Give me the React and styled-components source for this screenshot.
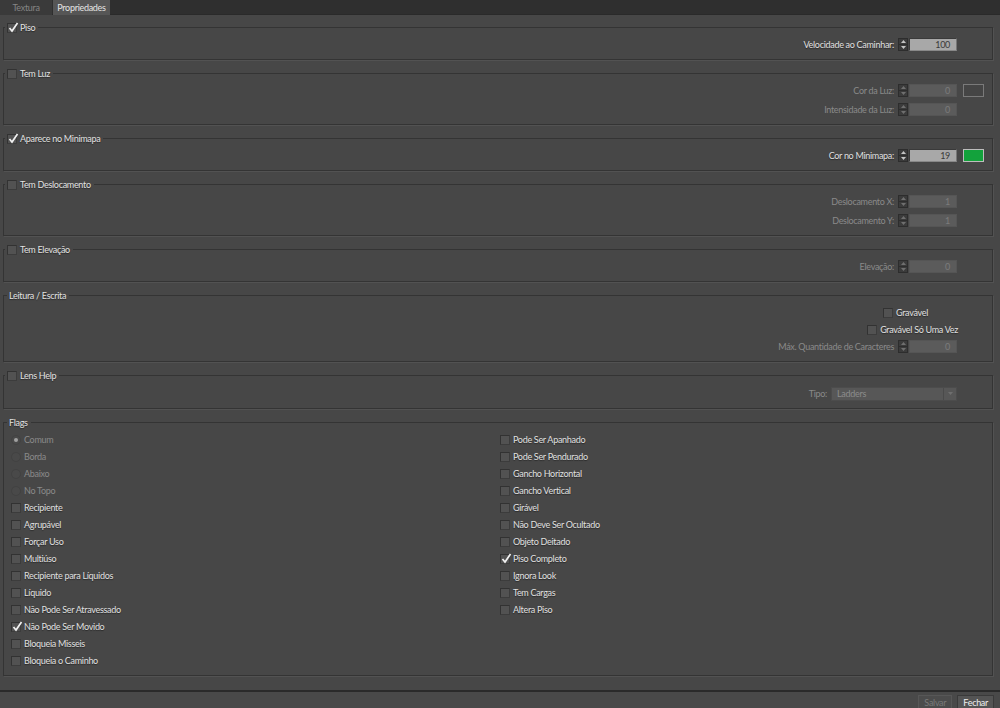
import React from 'react';
import styled, { createGlobalStyle, css } from 'styled-components';

const GlobalStyle = createGlobalStyle`
    html, body {
        margin: 0;
        padding: 0;
        background: #474747;
    }
    body {
        font-family: Lato, "Open Sans", sans-serif;
        font-size: 9px;
        letter-spacing: -0.3px;
        color: #dedede;
    }
    * { box-sizing: border-box; }
`;

const Page = styled.div`
    width: 1000px;
    height: 708px;
    display: flex;
    flex-direction: column;
    overflow: hidden;
`;

const TabBar = styled.div`
    height: 15px;
    display: flex;
    background: #2f2f2f;
    border-bottom: 1px solid #2a2a2a;
`;

const Tab = styled.div`
    height: 15px;
    display: flex;
    align-items: center;
    justify-content: center;
    width: ${p => p.$w}px;
    margin-right: 1px;
    background: ${p => (p.$active ? '#565656' : '#3a3a3a')};
    color: ${p => (p.$active ? '#e4e4e4' : '#858585')};
`;

const Content = styled.div`
    flex: 1;
    padding: 0 7px 0 3px;
`;

const Group = styled.div`
    position: relative;
    margin-top: ${p => (p.$first ? 12 : 13)}px;
    border: 1px solid #343434;
    box-shadow: 1px 1px 0 #525252;
    padding: ${p => p.$pt || 10}px 8px 8px 7px;
    display: flex;
    flex-direction: column;
    gap: ${p => (p.$gap != null ? p.$gap : 6)}px;
`;

const Legend = styled.div`
    position: absolute;
    top: -7px;
    left: ${p => (p.$check ? 1 : 3)}px;
    height: 13px;
    padding: 0 3px 0 2px;
    display: flex;
    align-items: center;
    gap: 3px;
    background: #474747;
    color: #e2e2e2;
    text-shadow: 0 1px 1px rgba(0, 0, 0, 0.45);
`;

const Row = styled.div`
    height: 13px;
    display: flex;
    align-items: center;
    justify-content: flex-end;
    gap: 4px;
    padding-right: ${p => p.$pr || 0}px;
`;

const Label = styled.span`
    color: ${p => (p.$disabled ? '#8a8a8a' : '#e0e0e0')};
    text-shadow: ${p => (p.$disabled ? 'none' : '0 1px 1px rgba(0,0,0,0.45)')};
    white-space: nowrap;
`;

const Trail = styled.div`
    width: 23px;
    height: 13px;
    display: flex;
    justify-content: flex-end;
`;

const Swatch = styled.div`
    width: 21px;
    height: 13px;
    background: ${p => p.$color};
    border: 1px solid ${p => (p.$disabled ? '#7a7a7a' : '#bdbdbd')};
`;

const Spinner = styled.div`
    display: flex;
    gap: 1px;
    height: 13px;
`;

const SpinButtons = styled.div`
    width: 10px;
    height: 13px;
    display: flex;
    flex-direction: column;
    background: #3b3b3b;
    border: 1px solid #2d2d2d;
`;

const SpinHalf = styled.div`
    flex: 1;
    display: flex;
    align-items: center;
    justify-content: center;
    ${p => p.$top && css`border-bottom: 1px solid #2d2d2d;`}
`;

const NumberBox = styled.div`
    width: 48px;
    height: 13px;
    padding-right: 6px;
    display: flex;
    align-items: center;
    justify-content: flex-end;
    ${p => p.$disabled
        ? css`
            background: #5b5b5b;
            color: #7c7c7c;
            border: 1px solid #555;
        `
        : css`
            background: #a8a8a8;
            color: #3a3a3a;
            border: 1px solid #3a3a3a;
            border-right-color: #777;
            border-bottom-color: #888;
        `}
`;

const Arrow = ({ down, disabled }) => (
    <svg width="5" height="3" viewBox="0 0 5 3">
        <path d={down ? 'M0 0 L5 0 L2.5 3 Z' : 'M0 3 L5 3 L2.5 0 Z'} fill={disabled ? '#6f6f6f' : '#c4c4c4'} />
    </svg>
);

const NumberField = ({ value, disabled }) => (
    <Spinner>
        <SpinButtons>
            <SpinHalf $top><Arrow disabled={disabled} /></SpinHalf>
            <SpinHalf><Arrow down disabled={disabled} /></SpinHalf>
        </SpinButtons>
        <NumberBox $disabled={disabled}>{value}</NumberBox>
    </Spinner>
);

const Box = styled.span`
    position: relative;
    flex: none;
    width: 10px;
    height: 10px;
    background: #525252;
    border: 1px solid #323232;
    border-right-color: #3c3c3c;
    border-bottom-color: #3c3c3c;
`;

const Tick = styled.svg`
    position: absolute;
    left: 0;
    top: -2px;
`;

const Check = ({ checked }) => (
    <Box>
        {checked && (
            <Tick width="11" height="11" viewBox="0 0 11 11">
                <path d="M1.5 6 L4 9 L9.5 1" fill="none" stroke="#f2f2f2" strokeWidth="1.7" />
            </Tick>
        )}
    </Box>
);

const Radio = styled.span`
    position: relative;
    flex: none;
    width: 10px;
    height: 10px;
    border-radius: 50%;
    background: #494949;
    border: 1px solid #424242;
    ${p => p.$checked && css`
        &::after {
            content: '';
            position: absolute;
            left: 2px;
            top: 2px;
            width: 4px;
            height: 4px;
            border-radius: 50%;
            background: #a0a0a0;
        }
    `}
`;

const Option = styled.div`
    height: 13px;
    display: flex;
    align-items: center;
    gap: 3px;
`;

const Select = styled.div`
    width: 126px;
    height: 14px;
    display: flex;
    align-items: center;
    background: #575757;
    border: 1px solid #4c4c4c;
    color: #8c8c8c;
`;

const SelectText = styled.span`
    flex: 1;
    padding-left: 5px;
`;

const SelectArrow = styled.span`
    width: 13px;
    height: 12px;
    border-left: 1px solid #4a4a4a;
    display: flex;
    align-items: center;
    justify-content: center;
`;

const FlagGrid = styled.div`
    display: grid;
    grid-template-columns: 489px 1fr;
`;

const FlagColumn = styled.div`
    display: flex;
    flex-direction: column;
    gap: 4px;
`;

const Footer = styled.div`
    height: 18px;
    border-top: 2px solid #2a2a2a;
    background: #494949;
    display: flex;
    justify-content: flex-end;
    align-items: flex-end;
    gap: 5px;
    padding-right: 6px;
`;

const Button = styled.div`
    height: 13px;
    padding: 0 5px;
    display: flex;
    align-items: center;
    border: 1px solid;
    border-bottom: none;
    ${p => p.$disabled
        ? css`
            background: #4c4c4c;
            border-color: #575757;
            color: #7a7a7a;
        `
        : css`
            background: #545454;
            border-color: #3a3a3a;
            color: #eeeeee;
        `}
`;

const Field = ({ label, value, disabled, swatch }) => (
    <Row>
        <Label $disabled={disabled}>{label}</Label>
        <NumberField value={value} disabled={disabled} />
        <Trail>{swatch && <Swatch $color={swatch} $disabled={disabled} />}</Trail>
    </Row>
);

const GroupTitle = ({ title, checked }) => (
    <Legend $check={checked !== undefined}>
        {checked !== undefined && <Check checked={checked} />}
        <span>{title}</span>
    </Legend>
);

const leftFlags = [
    { label: 'Comum', radio: true, checked: true },
    { label: 'Borda', radio: true },
    { label: 'Abaixo', radio: true },
    { label: 'No Topo', radio: true },
    { label: 'Recipiente' },
    { label: 'Agrupável' },
    { label: 'Forçar Uso' },
    { label: 'Multiúso' },
    { label: 'Recipiente para Líquidos' },
    { label: 'Líquido' },
    { label: 'Não Pode Ser Atravessado' },
    { label: 'Não Pode Ser Movido', checked: true },
    { label: 'Bloqueia Misseis' },
    { label: 'Bloqueia o Caminho' },
];

const rightFlags = [
    { label: 'Pode Ser Apanhado' },
    { label: 'Pode Ser Pendurado' },
    { label: 'Gancho Horizontal' },
    { label: 'Gancho Vertical' },
    { label: 'Girável' },
    { label: 'Não Deve Ser Ocultado' },
    { label: 'Objeto Deitado' },
    { label: 'Piso Completo', checked: true },
    { label: 'Ignora Look' },
    { label: 'Tem Cargas' },
    { label: 'Altera Piso' },
];

const Flag = ({ label, radio, checked }) => (
    <Option>
        {radio ? <Radio $checked={checked} /> : <Check checked={checked} />}
        <Label $disabled={radio}>{label}</Label>
    </Option>
);

export default function App() {
    return (
        <Page>
            <GlobalStyle />
            <TabBar>
                <Tab $w={52}>Textura</Tab>
                <Tab $w={57} $active>Propriedades</Tab>
            </TabBar>
            <Content>
                <Group $first>
                    <GroupTitle title="Piso" checked />
                    <Field label="Velocidade ao Caminhar:" value="100" />
                </Group>

                <Group>
                    <GroupTitle title="Tem Luz" checked={false} />
                    <Field label="Cor da Luz:" value="0" disabled swatch="#454545" />
                    <Field label="Intensidade da Luz:" value="0" disabled />
                </Group>

                <Group>
                    <GroupTitle title="Aparece no Minimapa" checked />
                    <Field label="Cor no Minimapa:" value="19" swatch="#13a23c" />
                </Group>

                <Group>
                    <GroupTitle title="Tem Deslocamento" checked={false} />
                    <Field label="Deslocamento X:" value="1" disabled />
                    <Field label="Deslocamento Y:" value="1" disabled />
                </Group>

                <Group>
                    <GroupTitle title="Tem Elevação" checked={false} />
                    <Field label="Elevação:" value="0" disabled />
                </Group>

                <Group $gap={4}>
                    <GroupTitle title="Leitura / Escrita" />
                    <Row $pr={56}>
                        <Option>
                            <Check />
                            <Label>Gravável</Label>
                        </Option>
                    </Row>
                    <Row $pr={26}>
                        <Option>
                            <Check />
                            <Label>Gravável Só Uma Vez</Label>
                        </Option>
                    </Row>
                    <Field label="Máx. Quantidade de Caracteres" value="0" disabled />
                </Group>

                <Group $pt={11}>
                    <GroupTitle title="Lens Help" checked={false} />
                    <Row>
                        <Label $disabled>Tipo:</Label>
                        <Select>
                            <SelectText>Ladders</SelectText>
                            <SelectArrow><Arrow down disabled /></SelectArrow>
                        </Select>
                        <Trail />
                    </Row>
                </Group>

                <Group $pt={10}>
                    <GroupTitle title="Flags" />
                    <FlagGrid>
                        <FlagColumn>
                            {leftFlags.map(f => <Flag key={f.label} {...f} />)}
                        </FlagColumn>
                        <FlagColumn>
                            {rightFlags.map(f => <Flag key={f.label} {...f} />)}
                        </FlagColumn>
                    </FlagGrid>
                </Group>
            </Content>
            <Footer>
                <Button $disabled>Salvar</Button>
                <Button>Fechar</Button>
            </Footer>
        </Page>
    );
}
